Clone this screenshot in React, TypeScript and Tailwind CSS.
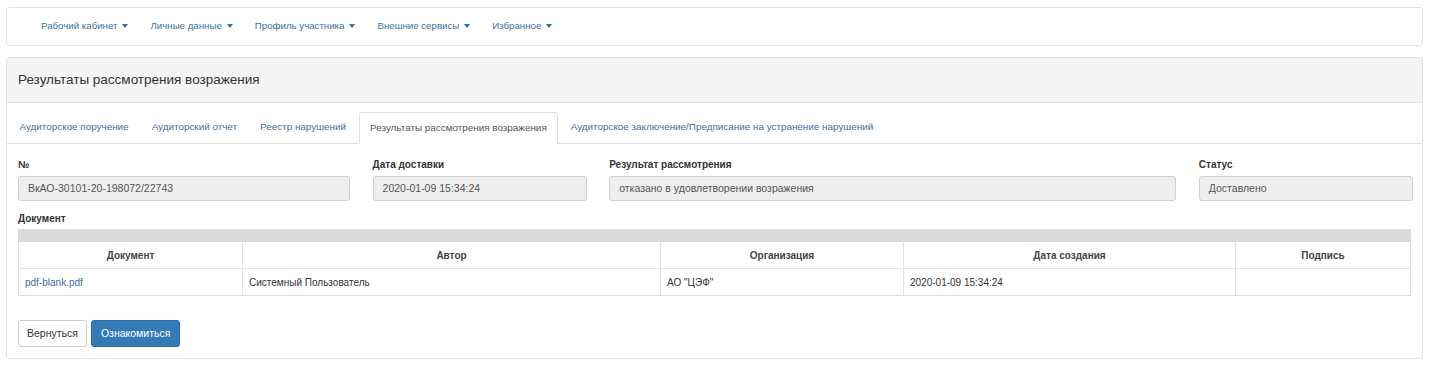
import React from "react";

const Caret = () => (
  <span className="ml-[5px] inline-block w-0 h-0 border-l-[3px] border-r-[3px] border-t-[4px] border-l-transparent border-r-transparent border-t-[#3d6f9c] align-middle" />
);

export default function App() {
  const nav = ["Рабочий кабинет", "Личные данные", "Профиль участника", "Внешние сервисы", "Избранное"];
  const tabs = [
    "Аудиторское поручение",
    "Аудиторский отчет",
    "Реестр нарушений",
    "Результаты рассмотрения возражения",
    "Аудиторское заключение/Предписание на устранение нарушений",
  ];
  return (
    <div className="w-[1429px] h-[385px] bg-white text-[#333] font-['Liberation_Sans',Arial,sans-serif] text-[10px] pt-[7px] px-[6px]">
      {/* Navbar */}
      <div className="h-[39px] border border-[#e3e3e3] rounded-[3px] bg-white flex items-center pl-[34px] gap-[22px] text-[9.7px] text-[#3d6f9c]">
        {nav.map((n) => (
          <span key={n} className="flex items-center">
            {n}
            <Caret />
          </span>
        ))}
      </div>

      {/* Panel */}
      <div className="mt-[11px] border border-[#e3e3e3] rounded-[3px] bg-white">
        <div className="h-[45px] bg-[#f5f5f5] border-b border-[#e3e3e3] flex items-center pl-[11px] text-[13.5px] text-[#333]">
          Результаты рассмотрения возражения
        </div>

        {/* Tabs */}
        <div className="pt-[9px] px-[2px] border-b border-[#e0e0e0] flex h-[41px] items-end">
          {tabs.map((t, i) => (
            <div
              key={t}
              className={
                i === 3
                  ? "h-[32px] -mb-px px-[10.5px] flex items-center border border-[#e0e0e0] border-b-white bg-white rounded-t-[3px] text-[#555] text-[9.9px] mr-[2px]"
                  : "h-[31px] px-[10.5px] flex items-center text-[#3d6f9c] text-[9.9px] mr-[2px]"
              }
            >
              {t}
            </div>
          ))}
        </div>

        {/* Body */}
        <div className="px-[11px] pt-[12px] pb-[11px]">
          <div className="grid grid-cols-[332px_214px_567px_214px] gap-x-[22.6px]">
            {[
              ["№", "ВкАО-30101-20-198072/22743"],
              ["Дата доставки", "2020-01-09 15:34:24"],
              ["Результат рассмотрения", "отказано в удовлетворении возражения"],
              ["Статус", "Доставлено"],
            ].map(([l, v]) => (
              <div key={l} className="flex flex-col">
                <div className="font-bold text-[10px] h-[17px] leading-[17px]">{l}</div>
                <div className="mt-[3px] h-[25px] border border-[#cfcfcf] rounded-[3px] bg-[#eeeeee] flex items-center px-[9px] text-[10.5px] text-[#555]">
                  {v}
                </div>
              </div>
            ))}
          </div>

          <div className="mt-[9px] font-bold text-[10px] h-[17px] leading-[17px]">Документ</div>

          <div className="mt-[2px] border border-[#dddddd]">
            <div className="h-[12px] bg-[#dadada]" />
            <div className="grid grid-cols-[223px_418px_243px_332px_1fr] text-[10px]">
              {["Документ", "Автор", "Организация", "Дата создания", "Подпись"].map((h, i) => (
                <div
                  key={h}
                  className={"h-[27px] flex items-center justify-center font-bold text-[#444] border-b border-[#e3e3e3] " + (i > 0 ? "border-l" : "")}
                >
                  {h}
                </div>
              ))}
              {[
                ["pdf-blank.pdf", true],
                ["Системный Пользователь", false],
                ['АО "ЦЭФ"', false],
                ["2020-01-09 15:34:24", false],
                ["", false],
              ].map(([c, link], i) => (
                <div
                  key={i}
                  className={"h-[26px] flex items-center px-[6px] " + (link ? "text-[#3d6f9c] " : "text-[#333] ") + (i > 0 ? "border-l border-[#e3e3e3]" : "")}
                >
                  {c as string}
                </div>
              ))}
            </div>
          </div>

          <div className="mt-[24px] flex gap-[4px]">
            <button className="h-[27px] px-[8px] border border-[#cccccc] rounded-[3px] bg-white text-[#333] text-[10.5px]">
              Вернуться
            </button>
            <button className="h-[27px] px-[9px] border border-[#2e6da4] rounded-[3px] bg-[#337ab7] text-white text-[10.5px]">
              Ознакомиться
            </button>
          </div>
        </div>
      </div>
    </div>
  );
}
